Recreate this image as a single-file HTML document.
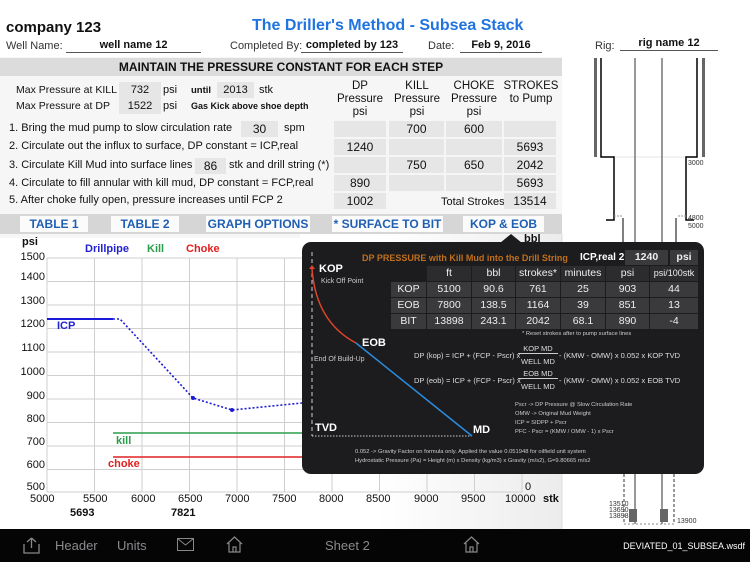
<!DOCTYPE html>
<html><head><meta charset="utf-8"><style>
*{margin:0;padding:0;box-sizing:border-box}
body{width:750px;height:562px;overflow:hidden;background:#fff;font-family:"Liberation Sans",Arial,sans-serif;position:relative;color:#111}
.a{position:absolute;white-space:nowrap}
.c{position:absolute;background:#e6e6e6;text-align:center;font-size:12px;line-height:16px;height:16px}
.b{font-weight:bold}
.tab{position:absolute;top:216px;height:16px;background:#fbfbfb;color:#1f5fb3;font-weight:bold;font-size:12px;text-align:center;line-height:16px}
.ov{position:absolute;left:302px;top:242px;width:402px;height:232px;background:#1c1c1e;border-radius:9px;color:#fff}
.t{position:absolute;height:15px;background:#3a3a3c;text-align:center;font-size:10.5px;line-height:15px;color:#eee}
.th{background:#2c2c2e}
.f{position:absolute;font-size:7.5px;color:#ddd;white-space:nowrap}
.n{position:absolute;font-size:5.8px;color:#ccc;white-space:nowrap}
.tb{position:absolute;top:538px;color:#8a8a8e;font-size:13px}
.r{position:absolute;left:9px;font-size:11px}
</style></head><body>
<div class="a" style="left:0;top:0;width:562px;height:238px;background:#f6f6f6"></div>
<div class="a" style="left:0;top:0;width:562px;height:57px;background:#fff"></div>
<svg class="a" style="left:560px;top:0" width="190" height="530">
<g fill="none">
<rect x="34" y="58" width="3" height="99" fill="#666"/>
<rect x="142" y="58" width="3" height="99" fill="#666"/>
<line x1="40" y1="157" x2="138" y2="157" stroke="#e4e4e4"/>
<polyline points="41,58 41,157 54,157 54,220 46,220" stroke="#000" stroke-width="1.5"/>
<polyline points="137,58 137,157 126,157 126,220 134,220" stroke="#000" stroke-width="1.5"/>
<line x1="75" y1="58" x2="75" y2="524" stroke="#777" stroke-width="1.5"/>
<line x1="102" y1="58" x2="102" y2="524" stroke="#777" stroke-width="1.5"/>
<line x1="63" y1="218" x2="63" y2="244" stroke="#000"/>
<line x1="116" y1="218" x2="116" y2="244" stroke="#000"/>
<path d="M54,216 h8 M118,216 h8" stroke="#999" stroke-dasharray="2,1"/>
<line x1="64" y1="474" x2="64" y2="524" stroke="#333" stroke-dasharray="3,2"/>
<line x1="114" y1="474" x2="114" y2="524" stroke="#333" stroke-dasharray="3,2"/>
<line x1="64" y1="524" x2="114" y2="524" stroke="#888" stroke-dasharray="2,2"/>
<rect x="69" y="509" width="8" height="13" fill="#666"/><rect x="100" y="509" width="8" height="13" fill="#666"/>
</g>
<g font-size="7" fill="#333"><text x="49" y="506">13510</text><text x="49" y="512">13690</text><text x="49" y="518">13898</text><text x="117" y="523">13900</text>
<text x="128" y="165">3000</text><text x="128" y="220">4800</text><text x="128" y="228">5000</text></g>
</svg>
<div class="a b" style="left:6px;top:19px;font-size:15px">company 123</div>
<div class="a b" style="left:252px;top:17px;font-size:16px;color:#1f74e0">The Driller's Method - Subsea Stack</div>
<div class="a" style="left:6px;top:40px;font-size:11px;color:#333">Well Name:</div>
<div class="a b" style="left:66px;top:39px;width:135px;font-size:11px;text-align:center;border-bottom:1px solid #555;height:14px">well name 12</div>
<div class="a" style="left:230px;top:40px;font-size:11px;color:#333">Completed By:</div>
<div class="a b" style="left:301px;top:39px;width:102px;font-size:11px;text-align:center;border-bottom:1px solid #555;height:14px">completed by 123</div>
<div class="a" style="left:428px;top:40px;font-size:11px;color:#333">Date:</div>
<div class="a b" style="left:460px;top:39px;width:82px;font-size:11px;text-align:center;border-bottom:1px solid #555;height:14px">Feb 9, 2016</div>
<div class="a" style="left:595px;top:40px;font-size:11px;color:#333">Rig:</div>
<div class="a b" style="left:620px;top:37px;width:98px;font-size:11px;text-align:center;border-bottom:1px solid #555;height:14px">rig name 12</div>
<div class="a b" style="left:0;top:58px;width:562px;height:18px;background:#dcdcdc;font-size:12px;text-align:center;line-height:18px">MAINTAIN THE PRESSURE CONSTANT FOR EACH STEP</div>
<div class="a" style="left:16px;top:84px;font-size:10.5px">Max Pressure at KILL</div>
<div class="c" style="left:119px;top:82px;width:42px;font-size:11px">732</div>
<div class="a" style="left:163px;top:84px;font-size:11px">psi</div>
<div class="a b" style="left:191px;top:85px;font-size:9.5px">until</div>
<div class="c" style="left:217px;top:82px;width:37px;font-size:11px">2013</div>
<div class="a" style="left:259px;top:84px;font-size:11px">stk</div>
<div class="a" style="left:16px;top:100px;font-size:10.5px">Max Pressure at DP</div>
<div class="c" style="left:119px;top:98px;width:42px;font-size:11px">1522</div>
<div class="a" style="left:163px;top:100px;font-size:11px">psi</div>
<div class="a b" style="left:191px;top:101px;font-size:9px">Gas Kick above shoe depth</div>
<div class="a" style="left:334px;top:80px;width:52px;text-align:center;font-size:11.5px;line-height:13px">DP<br>Pressure<br>psi</div>
<div class="a" style="left:391px;top:80px;width:52px;text-align:center;font-size:11.5px;line-height:13px">KILL<br>Pressure<br>psi</div>
<div class="a" style="left:446px;top:80px;width:56px;text-align:center;font-size:11.5px;line-height:13px">CHOKE<br>Pressure<br>psi</div>
<div class="a" style="left:502px;top:80px;width:58px;text-align:center;font-size:11.5px;line-height:13px">STROKES<br>to Pump</div>
<div class="r" style="top:122px">1. Bring the mud pump to slow circulation rate</div>
<div class="c" style="left:241px;top:121px;width:37px">30</div>
<div class="a" style="left:284px;top:122px;font-size:11px">spm</div>
<div class="r" style="top:140px">2. Circulate out the influx to surface, DP constant = ICP,real</div>
<div class="r" style="top:159px">3. Circulate Kill Mud into surface lines</div>
<div class="c" style="left:195px;top:158px;width:31px">86</div>
<div class="a" style="left:229px;top:159px;font-size:11px">stk and drill string (*)</div>
<div class="r" style="top:177px">4. Circulate to fill annular with kill mud, DP constant = FCP,real</div>
<div class="r" style="top:194px">5. After choke fully open, pressure increases until FCP 2</div>
<div class="c" style="left:334px;top:121px;width:52px"></div><div class="c" style="left:389px;top:121px;width:55px">700</div><div class="c" style="left:446px;top:121px;width:56px">600</div><div class="c" style="left:504px;top:121px;width:52px"></div>
<div class="c" style="left:334px;top:139px;width:52px">1240</div><div class="c" style="left:389px;top:139px;width:55px"></div><div class="c" style="left:446px;top:139px;width:56px"></div><div class="c" style="left:504px;top:139px;width:52px">5693</div>
<div class="c" style="left:334px;top:157px;width:52px"></div><div class="c" style="left:389px;top:157px;width:55px">750</div><div class="c" style="left:446px;top:157px;width:56px">650</div><div class="c" style="left:504px;top:157px;width:52px">2042</div>
<div class="c" style="left:334px;top:175px;width:52px">890</div><div class="c" style="left:389px;top:175px;width:55px"></div><div class="c" style="left:446px;top:175px;width:56px"></div><div class="c" style="left:504px;top:175px;width:52px">5693</div>
<div class="c" style="left:334px;top:193px;width:52px">1002</div>
<div class="a" style="left:441px;top:196px;font-size:11px">Total Strokes</div>
<div class="c" style="left:504px;top:193px;width:52px">13514</div>
<div class="a" style="left:0;top:214px;width:562px;height:20px;background:#d6d6d6"></div>
<div class="tab" style="left:20px;width:68px">TABLE 1</div>
<div class="tab" style="left:111px;width:68px">TABLE 2</div>
<div class="tab" style="left:206px;width:104px">GRAPH OPTIONS</div>
<div class="tab" style="left:332px;width:111px">* SURFACE TO BIT</div>
<div class="tab" style="left:463px;width:81px">KOP &amp; EOB</div>

<svg class="a" style="left:0;top:234px" width="563" height="295">
<defs><linearGradient id="g" x1="0" x2="1"><stop offset="0.3" stop-color="#fff"/><stop offset="1" stop-color="#ececec"/></linearGradient></defs>
<rect x="300" y="0" width="262" height="295" fill="url(#g)"/>
<g stroke="#cfcfcf" stroke-width="1">
<line x1="47" y1="24" x2="522" y2="24"/><line x1="47" y1="47.5" x2="522" y2="47.5"/><line x1="47" y1="71" x2="522" y2="71"/><line x1="47" y1="94.5" x2="522" y2="94.5"/><line x1="47" y1="118" x2="522" y2="118"/><line x1="47" y1="141.5" x2="522" y2="141.5"/><line x1="47" y1="165" x2="522" y2="165"/><line x1="47" y1="188.5" x2="522" y2="188.5"/><line x1="47" y1="212" x2="522" y2="212"/><line x1="47" y1="235.5" x2="522" y2="235.5"/><line x1="47" y1="258" x2="522" y2="258"/>
<line x1="47" y1="24" x2="47" y2="258"/><line x1="94.5" y1="24" x2="94.5" y2="258"/><line x1="142" y1="24" x2="142" y2="258"/><line x1="189.5" y1="24" x2="189.5" y2="258"/><line x1="237" y1="24" x2="237" y2="258"/><line x1="284.5" y1="24" x2="284.5" y2="258"/><line x1="332" y1="24" x2="332" y2="258"/><line x1="379.5" y1="24" x2="379.5" y2="258"/><line x1="427" y1="24" x2="427" y2="258"/><line x1="474.5" y1="24" x2="474.5" y2="258"/><line x1="522" y1="24" x2="522" y2="258"/>
</g>
<line x1="562" y1="0" x2="562" y2="295" stroke="#ddd"/>
<line x1="113" y1="199" x2="562" y2="199" stroke="#2a9d4a" stroke-width="1.5"/>
<line x1="113" y1="223" x2="562" y2="223" stroke="#e02020" stroke-width="1.5"/>
<line x1="47" y1="85" x2="113" y2="85" stroke="#1a1ad8" stroke-width="2"/>
<polyline points="113,85 120,85 193,164 232,176 302,169" fill="none" stroke="#1a1ad8" stroke-width="1.6" stroke-dasharray="2,2"/>
<circle cx="193" cy="164" r="2" fill="#1a1ad8"/><circle cx="232" cy="176" r="2" fill="#1a1ad8"/>
</svg>
<div class="a b" style="left:22px;top:236px;font-size:11px">psi</div>
<div class="a" style="left:0;top:251px;width:45px;text-align:right;font-size:11px;line-height:12px">1500</div>
<div class="a" style="left:0;top:271px;width:45px;text-align:right;font-size:11px">1400</div>
<div class="a" style="left:0;top:295px;width:45px;text-align:right;font-size:11px">1300</div>
<div class="a" style="left:0;top:318px;width:45px;text-align:right;font-size:11px">1200</div>
<div class="a" style="left:0;top:342px;width:45px;text-align:right;font-size:11px">1100</div>
<div class="a" style="left:0;top:366px;width:45px;text-align:right;font-size:11px">1000</div>
<div class="a" style="left:0;top:390px;width:45px;text-align:right;font-size:11px">900</div>
<div class="a" style="left:0;top:413px;width:45px;text-align:right;font-size:11px">800</div>
<div class="a" style="left:0;top:436px;width:45px;text-align:right;font-size:11px">700</div>
<div class="a" style="left:0;top:459px;width:45px;text-align:right;font-size:11px">600</div>
<div class="a" style="left:0;top:481px;width:45px;text-align:right;font-size:11px">500</div>
<div class="a b" style="left:85px;top:243px;font-size:11px;color:#2222d0">Drillpipe</div>
<div class="a b" style="left:147px;top:243px;font-size:11px;color:#2a9d4a">Kill</div>
<div class="a b" style="left:186px;top:243px;font-size:11px;color:#e02020">Choke</div>
<div class="a b" style="left:57px;top:320px;font-size:11px;color:#2222d0">ICP</div>
<div class="a b" style="left:116px;top:435px;font-size:11px;color:#2a9d4a">kill</div>
<div class="a b" style="left:108px;top:458px;font-size:11px;color:#e02020">choke</div>
<div class="a" style="left:30px;top:493px;font-size:11px">5000</div>
<div class="a" style="left:83px;top:493px;font-size:11px">5500</div>
<div class="a" style="left:131px;top:493px;font-size:11px">6000</div>
<div class="a" style="left:178px;top:493px;font-size:11px">6500</div>
<div class="a" style="left:225px;top:493px;font-size:11px">7000</div>
<div class="a" style="left:272px;top:493px;font-size:11px">7500</div>
<div class="a" style="left:319px;top:493px;font-size:11px">8000</div>
<div class="a" style="left:366px;top:493px;font-size:11px">8500</div>
<div class="a" style="left:414px;top:493px;font-size:11px">9000</div>
<div class="a" style="left:461px;top:493px;font-size:11px">9500</div>
<div class="a" style="left:505px;top:493px;font-size:11px">10000</div>
<div class="a" style="left:525px;top:481px;font-size:11px">0</div>
<div class="a b" style="left:543px;top:493px;font-size:11px">stk</div>
<div class="a b" style="left:70px;top:507px;font-size:11px">5693</div>
<div class="a b" style="left:171px;top:507px;font-size:11px">7821</div>
<div class="a b" style="left:524px;top:233px;font-size:11px">bbl</div>

<svg class="a" style="left:500px;top:234px" width="22" height="9"><polygon points="0,9 11,0 22,9" fill="#1c1c1e"/></svg>
<div class="ov">
<svg class="a" style="left:0;top:0" width="402" height="232">
<line x1="10" y1="10" x2="10" y2="194" stroke="#ccc" stroke-dasharray="4,3"/>
<line x1="10" y1="194" x2="170" y2="194" stroke="#ccc" stroke-dasharray="1.5,1.5"/>
<path d="M10,27 Q14,80 54,101" fill="none" stroke="#e0452a" stroke-width="1.5"/>
<path d="M7,27 L13,27 L10,23 Z" fill="#e0452a"/>
<line x1="54" y1="101" x2="170" y2="194" stroke="#2a8de0" stroke-width="1.5"/>
</svg>
<div class="a b" style="left:17px;top:21px;font-size:11px">KOP</div>
<div class="n" style="left:19px;top:36px;font-size:7px;color:#ccc">Kick Off Point</div>
<div class="a b" style="left:60px;top:95px;font-size:11px">EOB</div>
<div class="n" style="left:12px;top:114px;font-size:7px;color:#ccc">End Of Build-Up</div>
<div class="a b" style="left:13px;top:180px;font-size:11px">TVD</div>
<div class="a b" style="left:171px;top:182px;font-size:11px">MD</div>
<div class="a b" style="left:60px;top:11px;font-size:9px;color:#c0701c">DP PRESSURE with Kill Mud into the Drill String</div>
<div class="a b" style="left:278px;top:10px;font-size:10px">ICP,real 2</div>
<div class="t b" style="left:323px;top:8px;width:43px">1240</div>
<div class="t b" style="left:368px;top:8px;width:28px">psi</div>
<div class="t th" style="left:125px;top:24px;width:44px">ft</div>
<div class="t th" style="left:170px;top:24px;width:43px">bbl</div>
<div class="t th" style="left:214px;top:24px;width:44px">strokes*</div>
<div class="t th" style="left:259px;top:24px;width:44px">minutes</div>
<div class="t th" style="left:304px;top:24px;width:43px">psi</div>
<div class="t th" style="left:348px;top:24px;width:48px;font-size:9px">psi/100stk</div>
<div class="t" style="left:89px;top:40px;width:35px">KOP</div><div class="t" style="left:125px;top:40px;width:44px">5100</div><div class="t" style="left:170px;top:40px;width:43px">90.6</div><div class="t" style="left:214px;top:40px;width:44px">761</div><div class="t" style="left:259px;top:40px;width:44px">25</div><div class="t" style="left:304px;top:40px;width:43px">903</div><div class="t" style="left:348px;top:40px;width:48px">44</div>
<div class="t" style="left:89px;top:56px;width:35px">EOB</div><div class="t" style="left:125px;top:56px;width:44px">7800</div><div class="t" style="left:170px;top:56px;width:43px">138.5</div><div class="t" style="left:214px;top:56px;width:44px">1164</div><div class="t" style="left:259px;top:56px;width:44px">39</div><div class="t" style="left:304px;top:56px;width:43px">851</div><div class="t" style="left:348px;top:56px;width:48px">13</div>
<div class="t" style="left:89px;top:72px;width:35px">BIT</div><div class="t" style="left:125px;top:72px;width:44px">13898</div><div class="t" style="left:170px;top:72px;width:43px">243.1</div><div class="t" style="left:214px;top:72px;width:44px">2042</div><div class="t" style="left:259px;top:72px;width:44px">68.1</div><div class="t" style="left:304px;top:72px;width:43px">890</div><div class="t" style="left:348px;top:72px;width:48px">-4</div>
<div class="n" style="left:220px;top:89px">* Reset strokes after to pump surface lines</div>
<div class="f" style="left:112px;top:109px">DP (kop) = ICP + (FCP - Pscr) x</div>
<div class="f" style="left:216px;top:102px;width:40px;text-align:center;border-bottom:1px solid #ccc">KOP MD</div>
<div class="f" style="left:216px;top:115px;width:40px;text-align:center">WELL MD</div>
<div class="f" style="left:257px;top:109px">- (KMW - OMW) x 0.052 x KOP TVD</div>
<div class="f" style="left:112px;top:134px">DP (eob) = ICP + (FCP - Pscr) x</div>
<div class="f" style="left:216px;top:127px;width:40px;text-align:center;border-bottom:1px solid #ccc">EOB MD</div>
<div class="f" style="left:216px;top:140px;width:40px;text-align:center">WELL MD</div>
<div class="f" style="left:257px;top:134px">- (KMW - OMW) x 0.052 x EOB TVD</div>
<div class="n" style="left:213px;top:160px">Pscr -&gt; DP Pressure @ Slow Circulation Rate</div>
<div class="n" style="left:213px;top:169px">OMW -&gt; Original Mud Weight</div>
<div class="n" style="left:213px;top:178px">ICP = SIDPP + Pscr</div>
<div class="n" style="left:213px;top:187px">PFC - Pscr = (KMW / OMW - 1) x Pscr</div>
<div class="n" style="left:53px;top:207px">0.052 -&gt; Gravity Factor on formula only. Applied the value 0.051948 for oilfield unit system</div>
<div class="n" style="left:53px;top:216px">Hydrostatic Pressure (Pa) = Height (m) x Density (kg/m3) x Gravity (m/s2), G=9.80665 m/s2</div>
</div>

<div class="a" style="left:0;top:529px;width:750px;height:33px;background:#050505"></div>
<svg class="a" style="left:22px;top:536px" width="20" height="19"><path d="M2,8 V17 H17 V8 M9.5,2 L14,6 M9.5,2 L5,6 M9.5,2 V12" fill="none" stroke="#888" stroke-width="1.3"/></svg>
<div class="tb" style="left:55px">Header</div>
<div class="tb" style="left:117px">Units</div>
<svg class="a" style="left:177px;top:538px" width="17" height="13"><rect x="0.5" y="0.5" width="16" height="12" fill="none" stroke="#888"/><path d="M0.5,0.5 L8.5,7 L16.5,0.5" fill="none" stroke="#888"/></svg>
<svg class="a" style="left:226px;top:536px" width="17" height="17"><path d="M1,8 L8.5,1 L16,8 M3,7 V16 H14 V7 M7,16 V11 H10 V16" fill="none" stroke="#888" stroke-width="1.2"/></svg>
<div class="tb" style="left:325px">Sheet 2</div>
<svg class="a" style="left:463px;top:536px" width="17" height="17"><path d="M1,8 L8.5,1 L16,8 M3,7 V16 H14 V7 M7,16 V11 H10 V16" fill="none" stroke="#888" stroke-width="1.2"/></svg>
<div class="a" style="right:5px;top:541px;font-size:9px;color:#fff">DEVIATED_01_SUBSEA.wsdf</div>
</body></html>
